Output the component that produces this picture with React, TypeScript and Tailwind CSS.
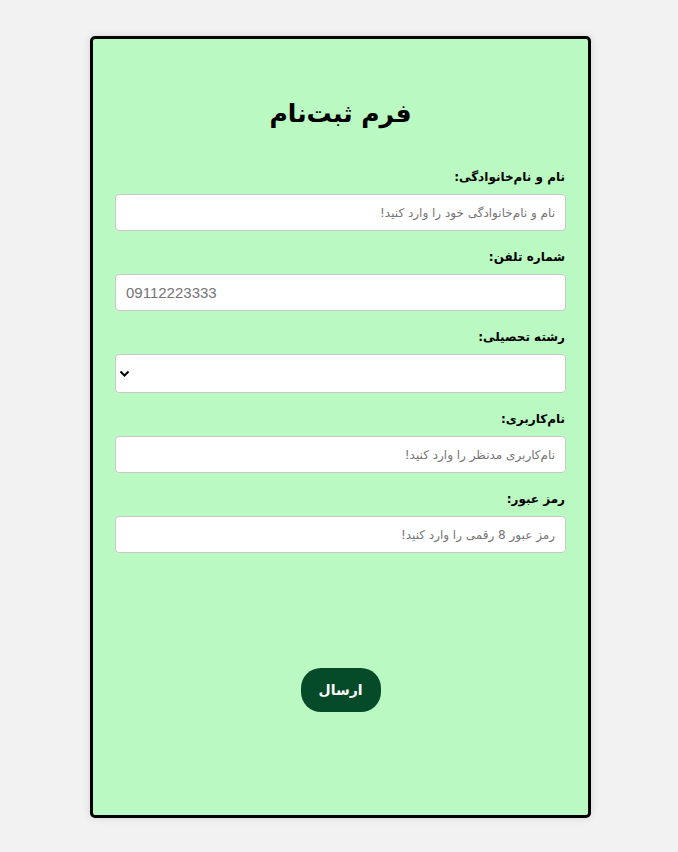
const fields = [
  { label: "نام و نام‌خانوادگی:", placeholder: "نام و نام‌خانوادگی خود را وارد کنید!", type: "text" },
  { label: "شماره تلفن:", placeholder: "09112223333", type: "tel" },
  { label: "رشته تحصیلی:", placeholder: "", type: "select" },
  { label: "نام‌کاربری:", placeholder: "نام‌کاربری مدنظر را وارد کنید!", type: "text" },
  { label: "رمز عبور:", placeholder: "رمز عبور 8 رقمی را وارد کنید!", type: "password" },
];

export default function App() {
  return (
    <div
      dir="rtl"
      className="min-h-[852px] bg-[#f2f2f2] pt-[36px] pl-[3px] flex justify-center"
      style={{ fontFamily: '"DejaVu Sans", Tahoma, sans-serif' }}
    >
      <form className="w-[501px] h-[782px] bg-[#bbf9c3] border-[3px] border-black rounded-[5px] shadow-[0_0_8px_rgba(0,0,0,0.12)] px-[22px] flex flex-col">
        <h1 className="text-center text-[25px] font-bold text-black mt-[57px] mb-[36px] leading-[36px]">فرم ثبت‌نام</h1>

        <div className="flex flex-col gap-[17px]">
          {fields.map((f, i) => (
            <div key={i} className="flex flex-col">
              <label className="text-[12px] font-bold text-black leading-[18px] mb-[8px] pr-[1px]">{f.label}</label>
              {f.type === "select" ? (
                <div className="relative h-[39px] bg-white border border-[#c8c8c8] rounded-[4px]">
                  <svg className="absolute left-[3px] top-[15px]" width="11" height="8" viewBox="0 0 11 8">
                    <path d="M1.5 1.5 L5.5 5.5 L9.5 1.5" fill="none" stroke="#000" strokeWidth="2" />
                  </svg>
                </div>
              ) : (
                <input
                  type={f.type === "password" ? "text" : f.type}
                  dir={f.type === "tel" ? "ltr" : "rtl"}
                  placeholder={f.placeholder}
                  className={`h-[37px] bg-white border border-[#c8c8c8] rounded-[4px] px-[10px] outline-none placeholder:text-[#757575] ${
                    f.type === "tel" ? "text-[15px]" : "text-[12px]"
                  }`}
                  style={f.type === "tel" ? { fontFamily: '"Liberation Sans", Arial, sans-serif' } : undefined}
                />
              )}
            </div>
          ))}
        </div>

        <div className="flex justify-center mt-[115px]">
          <button
            type="button"
            className="w-[80px] h-[44px] rounded-[20px] bg-[#054a29] text-white text-[14px] font-bold"
          >
            ارسال
          </button>
        </div>
      </form>
    </div>
  );
}
